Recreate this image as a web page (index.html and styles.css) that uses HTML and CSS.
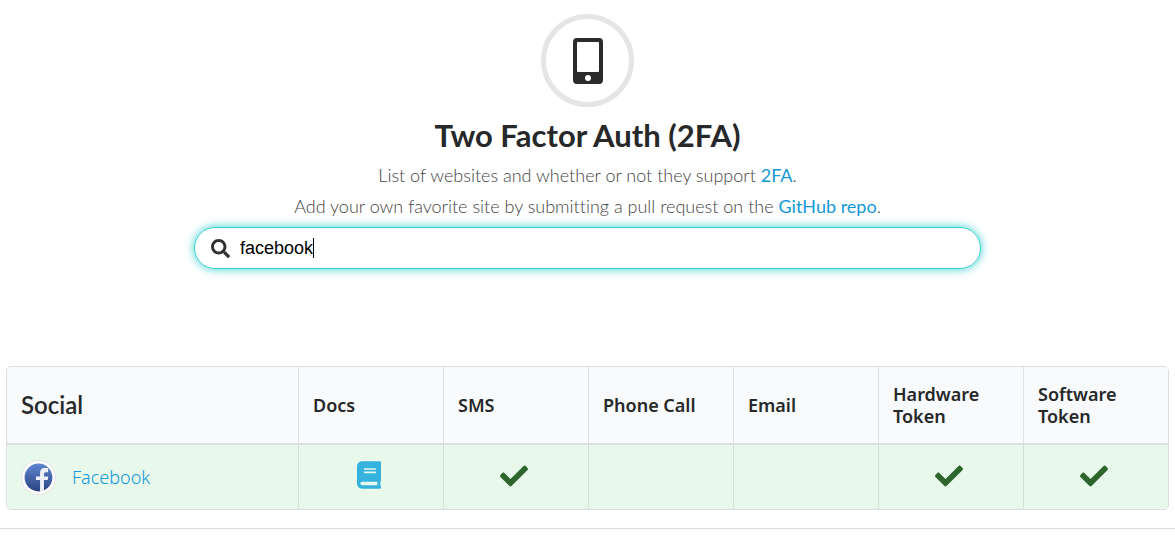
FILE: index.html
```html
<!DOCTYPE html>
<html lang="en">
<head>
<meta charset="utf-8">
<title>Two Factor Auth (2FA)</title>
<link rel="stylesheet" href="styles.css">
</head>
<body>
<svg class="symbols" aria-hidden="true">
  <symbol id="check" viewBox="0 0 512 512"><path d="M173.898 439.404l-166.4-166.4c-9.997-9.997-9.997-26.206 0-36.204l36.203-36.204c9.997-9.998 26.207-9.998 36.204 0L192 312.690 432.095 72.596c9.997-9.997 26.207-9.997 36.204 0l36.203 36.204c9.997 9.997 9.997 26.206 0 36.204l-294.4 294.401c-9.998 9.997-26.207 9.997-36.204-.001z"/></symbol>
</svg>
<header class="masthead">
  <div class="badge">
    <svg class="phone" viewBox="0 0 30 46" aria-hidden="true"><path fill-rule="evenodd" d="M4 0h22a4 4 0 0 1 4 4v38a4 4 0 0 1-4 4H4a4 4 0 0 1-4-4V4a4 4 0 0 1 4-4zM5 4a1 1 0 0 0-1 1v28a1 1 0 0 0 1 1h20a1 1 0 0 0 1-1V5a1 1 0 0 0-1-1zM15 37a3 3 0 1 0 0 6 3 3 0 0 0 0-6z"/></svg>
  </div>
  <h1 class="title">Two Factor Auth (2FA)</h1>
  <p class="lead">List of websites and whether or not they support <a href="#">2FA</a>.</p>
  <p class="lead">Add your own favorite site by submitting a pull request on the <a href="#">GitHub repo</a>.</p>
</header>
<label class="search">
  <svg class="search-icon" viewBox="0 0 512 512" aria-hidden="true"><path d="M505 442.700L405.300 343c-4.500-4.500-10.600-7-17-7H372c27.600-35.300 44-79.700 44-128C416 93.100 322.900 0 208 0S0 93.100 0 208s93.100 208 208 208c48.300 0 92.700-16.400 128-44v16.300c0 6.400 2.500 12.500 7 17l99.700 99.700c9.400 9.400 24.600 9.400 33.900 0l28.300-28.300c9.400-9.400 9.400-24.600.1-34zM208 336c-70.700 0-128-57.200-128-128 0-70.700 57.200-128 128-128 70.700 0 128 57.200 128 128 0 70.700-57.200 128-128 128z"/></svg>
  <input class="search-input" type="text" value="facebook" aria-label="Search websites">
  <span class="caret" aria-hidden="true"></span>
</label>
<main class="listing">
  <table class="sites">
    <thead>
      <tr><th class="category" scope="col">Social</th><th scope="col">Docs</th><th scope="col">SMS</th><th scope="col">Phone Call</th><th scope="col">Email</th><th scope="col">Hardware Token</th><th scope="col">Software Token</th></tr>
    </thead>
    <tbody>
      <tr>
        <td>
          <div class="site">
            <svg class="site-logo" viewBox="0 0 34 34" aria-hidden="true">
              <defs><linearGradient id="blue" x1="0" y1="0" x2="0" y2="1"><stop offset="0" stop-color="#5f86d2"/><stop offset="1" stop-color="#2a4380"/></linearGradient></defs>
              <circle cx="17" cy="17" r="16.500" fill="#fff" stroke="#e5e2e8"/>
              <circle cx="17" cy="17" r="13.500" fill="url(#blue)"/>
              <path d="M18.500 30.400V19.500h-4v-3.500h4V13c0-3.500 1.500-5.200 5-5.200h2.800V12h-2c-1.500 0-2 .7-2 2v2h4.200l-.6 3.500h-3.600v9.900c-1.300.6-2.400.9-3.800 1z" fill="#edf0f8"/>
            </svg>
            <a href="#">Facebook</a>
          </div>
        </td>
        <td><a class="docs" href="#" aria-label="Facebook documentation"><svg class="book" viewBox="0 0 448 512"><path d="M448 360V24c0-13.300-10.700-24-24-24H96C43 0 0 43 0 96v320c0 53 43 96 96 96h328c13.300 0 24-10.700 24-24v-16c0-7.500-3.500-14.300-8.900-18.700-4.200-15.400-4.200-59.300 0-74.700 5.400-4.300 8.900-11.100 8.900-18.600zM128 134c0-3.300 2.700-6 6-6h212c3.300 0 6 2.700 6 6v20c0 3.300-2.700 6-6 6H134c-3.300 0-6-2.700-6-6v-20zm0 64c0-3.300 2.700-6 6-6h212c3.300 0 6 2.700 6 6v20c0 3.300-2.700 6-6 6H134c-3.300 0-6-2.700-6-6v-20zm253.400 250H96c-17.700 0-32-14.300-32-32 0-17.600 14.400-32 32-32h285.400c-1.900 17.100-1.900 46.900 0 64z"/></svg></a></td>
        <td><svg class="check" role="img" aria-label="Yes"><use href="#check"/></svg></td>
        <td></td>
        <td></td>
        <td><svg class="check" role="img" aria-label="Yes"><use href="#check"/></svg></td>
        <td><svg class="check" role="img" aria-label="Yes"><use href="#check"/></svg></td>
      </tr>
    </tbody>
  </table>
</main>
<hr class="rule">
</body>
</html>
```
FILE: styles.css
```css
* { box-sizing: border-box; }
body {
  margin: 0;
  background: #fff;
  color: #262829;
  font: 300 18px/22px "Noto Sans", "Open Sans", sans-serif;
}
a { color: #1499d6; text-decoration: none; }
.symbols { display: none; }
.masthead {
  display: flex;
  flex-direction: column;
  align-items: center;
  padding-top: 14px;
  font-family: Lato, sans-serif;
  text-align: center;
}
.badge {
  display: flex;
  align-items: center;
  justify-content: center;
  width: 93px;
  height: 93px;
  border: 5px solid #e5e5e5;
  border-radius: 50%;
}
.phone { width: 30px; height: 46px; fill: #2b2b2b; }
.title { margin: 8px 0; font-size: 31px; font-weight: 700; line-height: 40px; }
.lead { margin: 0 0 7px; color: #444; line-height: 24px; font-variant-ligatures: none; }
.lead a { font-weight: 400; }
.search {
  position: relative;
  display: flex;
  align-items: center;
  gap: 10px;
  width: 67%;
  height: 42px;
  margin: 2px auto 97px;
  padding: 0 16px;
  border: 1px solid #35cfcb;
  border-radius: 21px;
  box-shadow: 0 0 10px #35cfcb;
}
.search-icon { width: 19px; height: 19px; fill: #303235; }
.search-input {
  flex: 1;
  min-width: 0;
  padding: 0;
  border: 0;
  outline: 0;
  background: none;
  color: #000;
  caret-color: transparent;
  font: 18px/22px "Liberation Sans", Arial, sans-serif;
}
.caret {
  position: absolute;
  top: 10px;
  left: 118px;
  width: 1px;
  height: 20px;
  background: #000;
}
.listing { padding: 0 6px; }
.sites {
  width: 100%;
  table-layout: fixed;
  border: 1px solid #dbdddf;
  border-radius: 5px;
  border-spacing: 0;
  overflow: hidden;
}
th {
  width: 145px;
  height: 78px;
  padding: 0 14px;
  border-bottom: 2px solid #dde1e3;
  border-left: 1px solid #dde0e3;
  background: #f9fafc;
  font-weight: 600;
  text-align: left;
}
.category { width: auto; font: 600 24px/30px Lato, sans-serif; }
td {
  height: 64px;
  padding: 0 18px 2px 14px;
  border-left: 1px solid #d3e0d5;
  background: #e8f8ea;
  text-align: center;
}
th:first-child, td:first-child { border-left: 0; }
.site { display: flex; align-items: center; gap: 16px; padding-top: 2px; }
.site-logo { width: 35px; height: 35px; }
.docs { display: inline-block; margin-top: 2px; }
.book { display: block; width: 24px; height: 28px; fill: #35b2de; }
.check { display: inline-block; width: 28px; height: 28px; fill: #2c662d; vertical-align: middle; }
.rule { margin: 18px 0 14px; border: 0; border-top: 1px solid #dcdcdc; }
```
